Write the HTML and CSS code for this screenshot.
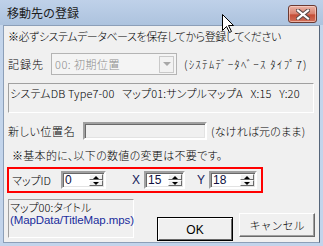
FILE: index.html
```html
<!DOCTYPE html>
<html lang="ja">
<head>
    <meta charset="UTF-8">
    <title>移動先の登録</title>
    <link rel="stylesheet" href="styles.css">
</head>
<body>
    <div class="window">
        <div class="titlebar">
            <span class="title">移動先の登録</span>
            <div class="close-btn">
                <svg width="14" height="11" viewBox="0 0 14 11">
                    <path d="M2 1.5 L12 9.5 M12 1.5 L2 9.5" stroke="#5a4a48" stroke-width="4.2" stroke-linecap="square"/>
                    <path d="M2 1.5 L12 9.5 M12 1.5 L2 9.5" stroke="#ffffff" stroke-width="2.2" stroke-linecap="square"/>
                </svg>
            </div>
        </div>

        <div class="client">
            <p class="warn">※必ずシステムデータベースを保存してから登録してください</p>

            <div class="row dest-row">
                <span class="label dest-label">記録先</span>
                <div class="combo">
                    <span class="combo-text">00: 初期位置</span>
                    <span class="combo-btn"><span class="arrow-down"></span></span>
                </div>
                <span class="note hankaku">(ｼｽﾃﾑﾃﾞｰﾀﾍﾞｰｽ ﾀｲﾌﾟ7)</span>
            </div>

            <div class="info-box">システムDB Type7-00&nbsp;&nbsp;&nbsp;マップ01:サンプルマップA&nbsp;&nbsp;&nbsp;X:15&nbsp;&nbsp;&nbsp;Y:20</div>

            <div class="row name-row">
                <span class="label name-label">新しい位置名</span>
                <div class="text-box"></div>
                <span class="note">(なければ元のまま)</span>
            </div>

            <p class="notice">※基本的に、以下の数値の変更は不要です。</p>

            <div class="coords">
                <span class="label id-label">マップID</span>
                <div class="spin spin-id">
                    <span class="spin-value">0</span>
                    <div class="spin-btns">
                        <span class="spin-btn"><span class="arrow-up"></span></span>
                        <span class="spin-btn"><span class="arrow-down small"></span></span>
                    </div>
                </div>
                <span class="axis axis-x">X</span>
                <div class="spin spin-x">
                    <span class="spin-value">15</span>
                    <div class="spin-btns">
                        <span class="spin-btn"><span class="arrow-up"></span></span>
                        <span class="spin-btn"><span class="arrow-down small"></span></span>
                    </div>
                </div>
                <span class="axis axis-y">Y</span>
                <div class="spin spin-y">
                    <span class="spin-value">18</span>
                    <div class="spin-btns">
                        <span class="spin-btn"><span class="arrow-up"></span></span>
                        <span class="spin-btn"><span class="arrow-down small"></span></span>
                    </div>
                </div>
            </div>

            <div class="bottom">
                <div class="map-box">
                    <div>マップ00:タイトル</div>
                    <div class="map-path">(MapData/TitleMap.mps)</div>
                </div>
                <div class="buttons">
                    <button type="button" class="btn btn-default">OK</button>
                    <button type="button" class="btn">キャンセル</button>
                </div>
            </div>
        </div>

        <!-- mouse pointer over the title bar -->
        <svg class="cursor" width="13" height="20" viewBox="0 0 13 20">
            <path d="M0.5 0.5 L0.5 16.5 L4.5 12.5 L7.5 18.5 L9.5 17.5 L6.5 11.5 L11.5 11.5 Z" fill="#fff" stroke="#000" stroke-width="1"/>
        </svg>
    </div>
</body>
</html>
```

FILE: styles.css
```css
* {
    margin: 0;
    padding: 0;
    box-sizing: border-box;
}

body {
    background-color: #c2d4eb;
    font-family: "Noto Sans CJK JP", "Liberation Sans", sans-serif;
    font-size: 11px;
    font-weight: 300;
    font-feature-settings: "palt";
    color: #000;
}

.window {
    position: relative;
    width: 323px;
    height: 246px;
    padding: 0 3px 3px 3px;
    background: linear-gradient(#c4d5eb, #c2d4eb);
    display: flex;
    flex-direction: column;
    overflow: hidden;
}

.titlebar {
    height: 25px;
    display: flex;
    align-items: flex-start;
    justify-content: space-between;
    background: linear-gradient(#bfd1e9, #adc3de);
    margin: 0 -3px;
    padding: 0 6px 0 7px;
}

.title {
    font-size: 12px;
    font-weight: 400;
    line-height: 16px;
    margin-top: 5px;
    color: #1b1b1b;
    font-feature-settings: normal;
}

.close-btn {
    width: 29px;
    height: 18px;
    margin-top: 5px;
    border: 1px solid #6b3a32;
    border-radius: 3px;
    background: linear-gradient(#eab3a5, #d9826f 50%, #c54d36 55%, #d0705a);
    box-shadow: inset 0 0 0 1px rgba(255, 220, 210, 0.6);
    display: flex;
    align-items: center;
    justify-content: center;
}

.client {
    flex: 1;
    background-color: #f0f0f0;
    border: 1px solid #8c9fb8;
    border-right-color: #55657a;
}

.warn {
    line-height: 16px;
    margin-top: 2px;
    padding-left: 4px;
    letter-spacing: -0.45px;
}

.row {
    display: flex;
    align-items: center;
    padding-left: 4px;
}

.label {
    line-height: 16px;
    white-space: nowrap;
}

.dest-row {
    margin-top: 9px;
    height: 22px;
}

.dest-label {
    width: 43px;
    letter-spacing: 1px;
}

.combo {
    width: 126px;
    height: 22px;
    border: 1px solid #b4b4b4;
    background-color: #f4f4f4;
    display: flex;
    align-items: center;
    justify-content: space-between;
    padding: 0 2px 0 3px;
}

.combo-text {
    color: #8d8d8d;
    letter-spacing: 0.5px;
}

.combo-btn {
    width: 15px;
    height: 17px;
    border: 1px solid #c9c9c9;
    background-color: #f2f2f2;
    display: flex;
    align-items: center;
    justify-content: center;
}

.arrow-down {
    width: 0;
    height: 0;
    border-left: 4px solid transparent;
    border-right: 4px solid transparent;
    border-top: 4px solid #a8a8a8;
}

.arrow-down.small {
    border-left-width: 3px;
    border-right-width: 3px;
    border-top: 3px solid #000;
}

.arrow-up {
    width: 0;
    height: 0;
    border-left: 3px solid transparent;
    border-right: 3px solid transparent;
    border-bottom: 3px solid #000;
}

.note {
    margin-left: 6px;
    white-space: nowrap;
}

.hankaku {
    margin-left: 7px;
    letter-spacing: 1.2px;
}

.info-box {
    margin: 8px 5px 0 4px;
    height: 30px;
    border: 1px solid;
    border-color: #a0a0a0 #ffffff #ffffff #a0a0a0;
    padding: 2px 0 0 1px;
    line-height: 14px;
    letter-spacing: 0.15px;
    white-space: nowrap;
    overflow: hidden;
}

.name-row {
    margin-top: 9px;
    height: 18px;
}

.name-label {
    width: 75px;
    letter-spacing: 0.6px;
}

.text-box {
    width: 124px;
    height: 18px;
    border: 2px solid;
    border-color: #a0a0a0 #ffffff #ffffff #a0a0a0;
    box-shadow: inset 1px 1px 0 #696969, inset -1px -1px 0 #e3e3e3;
    background-color: #f0f0f0;
}

.name-row .note {
    margin-left: 4px;
    letter-spacing: 0.2px;
}

.notice {
    margin-top: 7px;
    padding-left: 8px;
    line-height: 16px;
    letter-spacing: 0.3px;
}

.coords {
    margin: 4px 0 0 3px;
    width: 256px;
    height: 26px;
    border: 2px solid #ff0000;
    display: flex;
    align-items: center;
    padding-left: 3px;
}

.id-label {
    width: 49px;
}

.spin {
    height: 18px;
    background-color: #fff;
    border: 2px solid;
    border-color: #a0a0a0 #ffffff #ffffff #a0a0a0;
    box-shadow: inset 1px 1px 0 #696969, inset -1px -1px 0 #e3e3e3;
    display: flex;
    justify-content: space-between;
    padding: 0 1px 0 2px;
    line-height: 14px;
}

.spin-id { width: 45px; }
.spin-x { width: 41px; }
.spin-y { width: 48px; }

.spin-value {
    color: #101040;
    font-family: "Liberation Sans", sans-serif;
    font-size: 12px;
}

.spin-btns {
    width: 14px;
    display: flex;
    flex-direction: column;
    padding: 1px 0;
}

.spin-btn {
    flex: 1;
    background-color: #f0f0f0;
    border: 1px solid;
    border-color: #ffffff #696969 #696969 #ffffff;
    display: flex;
    align-items: center;
    justify-content: center;
}

.axis {
    width: 12px;
    color: #15205a;
    font-family: "Liberation Sans", sans-serif;
    font-size: 12px;
}

.axis-x { margin-left: 26px; }
.axis-y { margin-left: 12px; }

.bottom {
    display: flex;
    justify-content: space-between;
    align-items: flex-start;
    margin: 6px 4px 0 4px;
}

.map-box {
    width: 126px;
    height: 39px;
    border: 1px solid;
    border-color: #a0a0a0 #ffffff #ffffff #a0a0a0;
    padding: 1px 0 0 1px;
    line-height: 13px;
    white-space: nowrap;
}

.map-path {
    color: #1a2c9c;
    font-family: "Liberation Sans", sans-serif;
    font-size: 11.5px;
    letter-spacing: -0.1px;
}

.buttons {
    display: flex;
    gap: 6px;
    margin-top: 14px;
}

.btn {
    width: 76px;
    height: 24px;
    font-family: inherit;
    font-size: 11px;
    font-weight: 300;
    color: #000;
    background-color: #f0f0f0;
    border: 1px solid;
    border-color: #ffffff #696969 #696969 #ffffff;
    box-shadow: inset -1px -1px 0 #a0a0a0;
}

.btn-default {
    margin-top: 4px;
    border: 1px solid #000;
    box-shadow: inset 1px 1px 0 #fff, inset -1px -1px 0 #696969;
    padding-top: 2px;
    font-family: "Liberation Sans", sans-serif;
    font-size: 12px;
}

.cursor {
    position: absolute;
    left: 222px;
    top: 14px;
}
```
